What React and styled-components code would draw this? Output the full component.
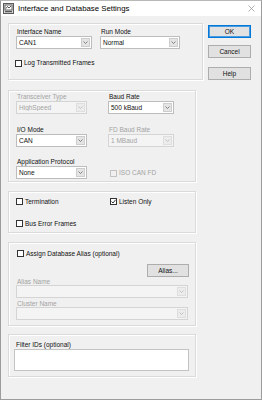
import React from 'react'
import styled, { createGlobalStyle } from 'styled-components'

const Global = createGlobalStyle`
  html, body {
    margin: 0;
    padding: 0;
    background: #f0f0f0;
  }
  * { box-sizing: border-box; }
`

const Window = styled.div`
  width: 262px;
  height: 400px;
  background: #f0f0f0;
  border: 1px solid #9c9c9c;
  border-top-color: #b8b8b8;
  display: flex;
  flex-direction: column;
  font-family: "Liberation Sans", Arial, sans-serif;
  font-size: 6.5px;
  color: #111;
`

const TitleBar = styled.div`
  height: 15px;
  background: #fff;
  display: flex;
  align-items: center;
  padding-left: 2px;
  gap: 4px;
  flex-shrink: 0;
`

const TitleText = styled.span`
  font-size: 7.8px;
  line-height: 15px;
  color: #000;
`

const CloseX = styled.div`
  margin-left: auto;
  margin-right: 6px;
  display: flex;
`

const Body = styled.div`
  display: flex;
  padding: 7px 0 0 7px;
`

const LeftCol = styled.div`
  display: flex;
  flex-direction: column;
`

const RightCol = styled.div`
  display: flex;
  flex-direction: column;
  margin-left: 5px;
`

const Group = styled.div`
  width: ${p => p.$w}px;
  height: ${p => p.$h}px;
  margin-top: ${p => p.$mt || 0}px;
  border: 1px solid #dadada;
  box-shadow: inset 1px 1px 0 #fff, 1px 1px 0 #fff;
  padding: ${p => p.$pad};
  display: flex;
  flex-direction: column;
`

const FieldGrid = styled.div`
  display: grid;
  grid-template-columns: ${p => p.$cols};
  column-gap: ${p => p.$cgap}px;
  row-gap: ${p => p.$rgap}px;
`

const Field = styled.div`
  display: flex;
  flex-direction: column;
`

const Label = styled.div`
  line-height: ${p => p.$lh || 8}px;
  height: ${p => p.$lh || 8}px;
  padding-left: ${p => p.$pl ?? 1}px;
  margin-top: ${p => p.$mt || 0}px;
  color: ${p => (p.$disabled ? '#a3a3a3' : '#111')};
  white-space: nowrap;
`

const SelectBox = styled.div`
  height: ${p => p.$h || 13}px;
  width: ${p => (p.$w ? `${p.$w}px` : '100%')};
  border: 1px solid ${p => (p.$disabled ? '#d4d4d4' : '#bdbdbd')};
  background: ${p => (p.$disabled ? '#f4f4f4' : '#fff')};
  color: ${p => (p.$disabled ? '#a3a3a3' : '#111')};
  display: flex;
  align-items: center;
  padding: 1px;
`

const SelectValue = styled.span`
  flex: 1;
  padding-left: 1px;
  white-space: nowrap;
  overflow: hidden;
`

const DropBtn = styled.div`
  width: 9px;
  height: 100%;
  background: ${p => (p.$disabled ? '#ececec' : '#e4e4e4')};
  border: 1px solid ${p => (p.$disabled ? '#dedede' : '#cdcdcd')};
  display: flex;
  align-items: center;
  justify-content: center;
`

const CheckRow = styled.label`
  display: flex;
  align-items: center;
  gap: 2px;
  line-height: 8px;
  height: 8px;
  margin-top: ${p => p.$mt || 0}px;
  margin-left: ${p => p.$ml || 0}px;
  color: ${p => (p.$disabled ? '#a3a3a3' : '#111')};
  white-space: nowrap;
`

const Box = styled.span`
  width: 7px;
  height: 7px;
  border: 1px solid ${p => (p.$disabled ? '#c2c2c2' : '#333')};
  background: ${p => (p.$disabled ? '#f0f0f0' : '#fff')};
  display: flex;
  align-items: center;
  justify-content: center;
  flex-shrink: 0;
`

const Button = styled.div`
  width: ${p => p.$w || 43}px;
  height: 13px;
  margin-top: ${p => p.$mt || 0}px;
  align-self: ${p => p.$align || 'auto'};
  background: #e1e1e1;
  border: 1px solid ${p => (p.$default ? '#0078d7' : '#adadad')};
  box-shadow: ${p => (p.$default ? 'inset 0 0 0 1px #4a9be0' : 'none')};
  display: flex;
  align-items: center;
  justify-content: center;
  line-height: 11px;
  color: #111;
`

const TextArea = styled.div`
  height: 22px;
  width: 175px;
  margin-top: 1.5px;
  background: #fff;
  border: 1px solid #c3c3c3;
`

const Cell = styled.div`
  display: flex;
  align-items: ${p => p.$align || 'stretch'};
  padding-left: ${p => p.$pl || 0}px;
  padding-bottom: ${p => p.$pb || 0}px;
`

const Chevron = ({ disabled }) => (
  <svg width="5" height="3" viewBox="0 0 5 3">
    <path d="M0.5 0.5 L2.5 2.5 L4.5 0.5" fill="none" stroke={disabled ? '#b8b8b8' : '#6a6a6a'} strokeWidth="0.8" />
  </svg>
)

const Select = ({ value, disabled, w, h }) => (
  <SelectBox $disabled={disabled} $w={w} $h={h}>
    <SelectValue>{value}</SelectValue>
    <DropBtn $disabled={disabled}>
      <Chevron disabled={disabled} />
    </DropBtn>
  </SelectBox>
)

const Check = ({ label, checked, disabled, mt, ml }) => (
  <CheckRow $disabled={disabled} $mt={mt} $ml={ml}>
    <Box $disabled={disabled}>
      {checked && (
        <svg width="5" height="5" viewBox="0 0 5 5">
          <path d="M0.5 2.5 L2 4 L4.6 0.8" fill="none" stroke="#222" strokeWidth="0.9" />
        </svg>
      )}
    </Box>
    {label}
  </CheckRow>
)

const AppIcon = () => (
  <svg width="11" height="11" viewBox="0 0 11 11">
    <rect x="0.5" y="0.5" width="10" height="10" fill="#d8d8d8" stroke="#5a5a5a" />
    <rect x="2" y="2" width="7" height="5" fill="#fff" stroke="#444" strokeWidth="0.8" />
    <path d="M3 5.5 L4.5 3.5 L6 5 L8 3" fill="none" stroke="#2a2a2a" strokeWidth="0.8" />
    <rect x="2" y="8" width="7" height="1.2" fill="#555" />
  </svg>
)

export default function App() {
  return (
    <>
      <Global />
      <Window>
        <TitleBar>
          <AppIcon />
          <TitleText>Interface and Database Settings</TitleText>
          <CloseX>
            <svg width="7" height="7" viewBox="0 0 7 7">
              <path d="M0.5 0.5 L6.5 6.5 M6.5 0.5 L0.5 6.5" stroke="#9a9a9a" strokeWidth="0.8" />
            </svg>
          </CloseX>
        </TitleBar>
        <Body>
          <LeftCol>
            <Group $w={195} $h={57} $pad="4px 0 0 7px">
              <FieldGrid $cols="76px 80px" $cgap={8} $rgap={0}>
                <Field>
                  <Label>Interface Name</Label>
                  <Select value="CAN1" />
                </Field>
                <Field>
                  <Label>Run Mode</Label>
                  <Select value="Normal" />
                </Field>
              </FieldGrid>
              <Check label="Log Transmitted Frames" mt={10} ml={-1} />
            </Group>

            <Group $w={188} $h={92} $mt={10} $pad="2px 0 0 7px">
              <FieldGrid $cols="71px 66px" $cgap={21} $rgap={11.5}>
                <Field>
                  <Label $disabled>Transceiver Type</Label>
                  <Select value="HighSpeed" disabled />
                </Field>
                <Field>
                  <Label>Baud Rate</Label>
                  <Select value="500 kBaud" />
                </Field>
                <Field>
                  <Label>I/O Mode</Label>
                  <Select value="CAN" />
                </Field>
                <Field>
                  <Label $disabled>FD Baud Rate</Label>
                  <Select value="1 MBaud" disabled />
                </Field>
                <Field>
                  <Label>Application Protocol</Label>
                  <Select value="None" />
                </Field>
                <Cell $align="flex-end" $pl={2} $pb={2}>
                  <Check label="ISO CAN FD" disabled />
                </Cell>
              </FieldGrid>
            </Group>

            <Group $w={188} $h={42} $mt={9} $pad="5.5px 0 0 7px">
              <FieldGrid $cols="71px 66px" $cgap={21} $rgap={14}>
                <Check label="Termination" />
                <Cell $pl={2}>
                  <Check label="Listen Only" checked />
                </Cell>
                <Check label="Bus Error Frames" />
              </FieldGrid>
            </Group>

            <Group $w={188} $h={84} $mt={9} $pad="6.5px 6px 0 7px">
              <Check label="Assign Database Alias (optional)" ml={1} />
              <Button $w={42} $mt={6.5} $align="flex-end">Alias...</Button>
              <Label $disabled $lh={7} $mt={1}>Alias Name</Label>
              <Select value="" disabled w={172} />
              <Label $disabled $lh={7} $mt={2}>Cluster Name</Label>
              <Select value="" disabled w={172} />
            </Group>

            <Group $w={188} $h={43} $mt={8} $pad="5.5px 0 0 5px">
              <Label $lh={7} $pl={2}>Filter IDs (optional)</Label>
              <TextArea />
            </Group>
          </LeftCol>

          <RightCol>
            <Button $default $mt={2}>OK</Button>
            <Button $mt={7}>Cancel</Button>
            <Button $mt={9}>Help</Button>
          </RightCol>
        </Body>
      </Window>
    </>
  )
}
